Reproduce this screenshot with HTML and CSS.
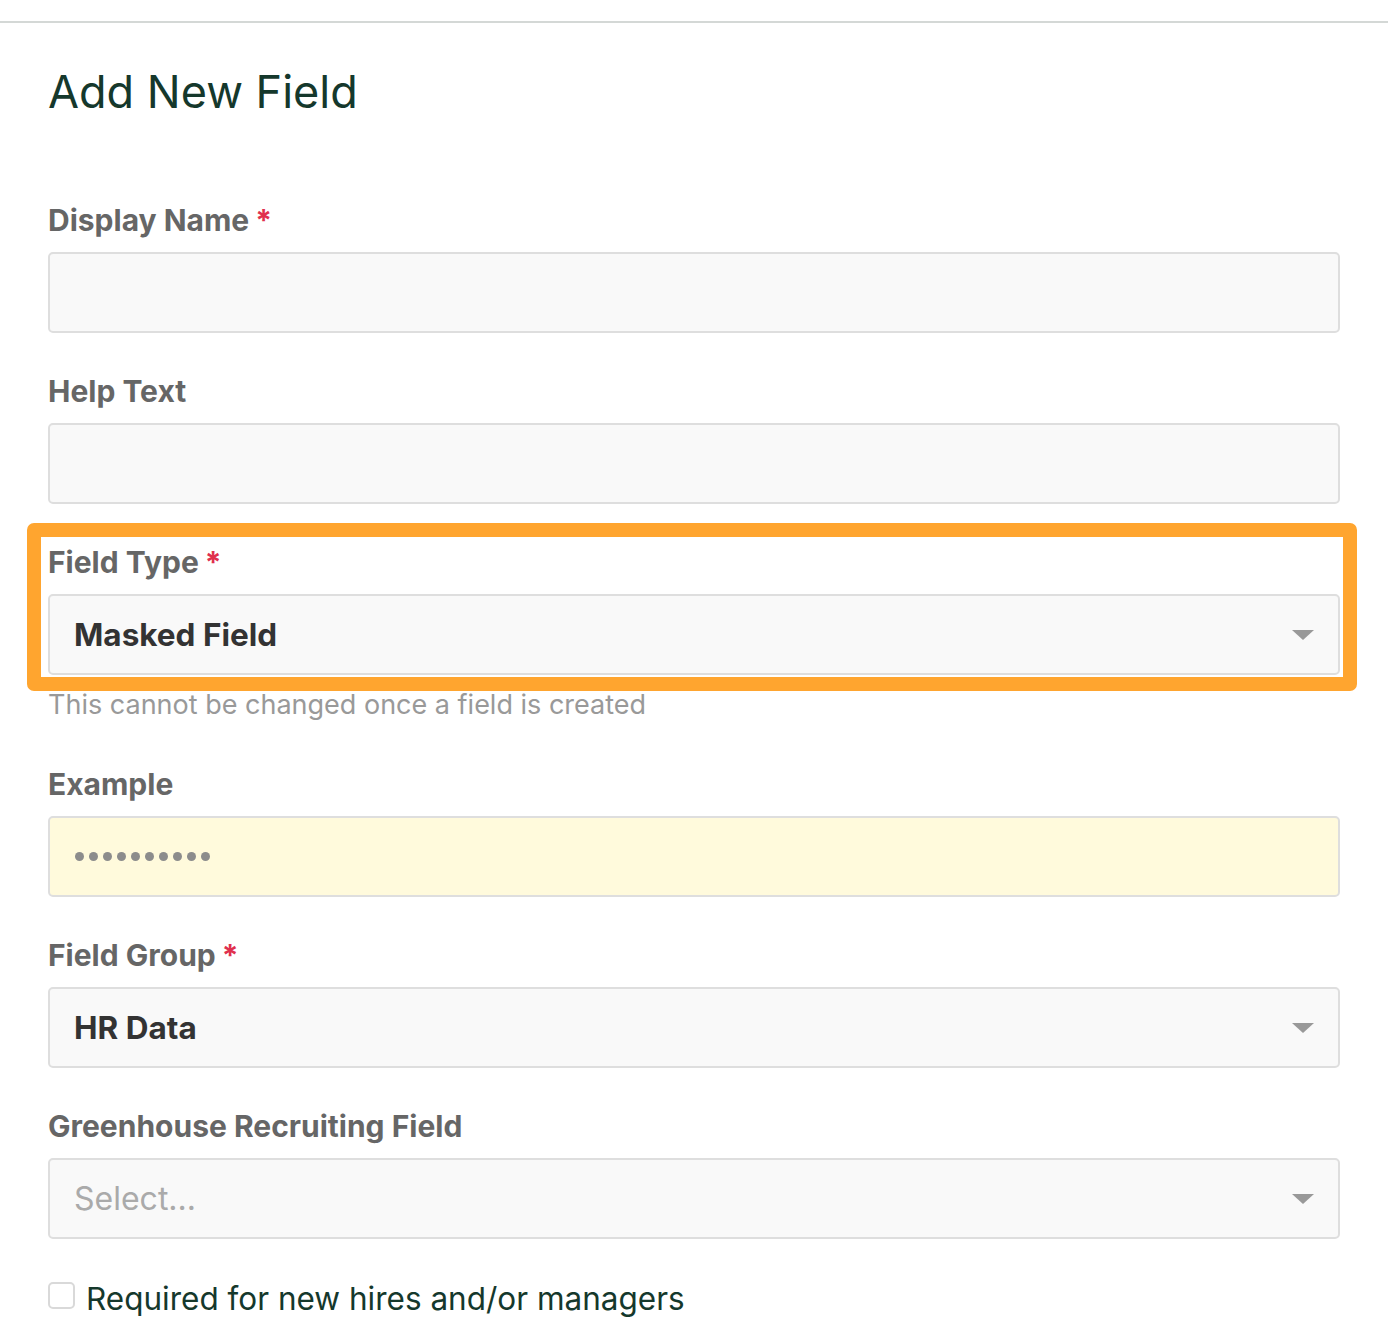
FILE: index.html
```html
<!DOCTYPE html>
<html lang="en">
<head>
    <meta charset="UTF-8">
    <meta name="viewport" content="width=device-width, initial-scale=1.0">
    <title>Add New Field</title>
    <link rel="stylesheet" href="styles.css">
</head>
<body>
    <div class="topbar"></div>

    <main class="page">
        <h1 class="page-title">Add New Field</h1>

        <form class="field-form">
            <div class="form-group">
                <label class="form-label" for="display-name">Display Name<span class="required">*</span></label>
                <input type="text" id="display-name" class="form-input">
            </div>

            <div class="form-group">
                <label class="form-label" for="help-text">Help Text</label>
                <input type="text" id="help-text" class="form-input">
            </div>

            <div class="form-group form-group--highlight">
                <label class="form-label">Field Type<span class="required">*</span></label>
                <div class="form-select">
                    <span class="select-value">Masked Field</span>
                    <span class="select-caret"></span>
                </div>
                <div class="highlight-frame"></div>
            </div>
            <p class="form-hint">This cannot be changed once a field is created</p>

            <div class="form-group">
                <label class="form-label">Example</label>
                <div class="form-input form-input--example">
                    <span class="mask-dot"></span><span class="mask-dot"></span><span class="mask-dot"></span><span class="mask-dot"></span><span class="mask-dot"></span><span class="mask-dot"></span><span class="mask-dot"></span><span class="mask-dot"></span><span class="mask-dot"></span><span class="mask-dot"></span>
                </div>
            </div>

            <div class="form-group">
                <label class="form-label">Field Group<span class="required">*</span></label>
                <div class="form-select">
                    <span class="select-value">HR Data</span>
                    <span class="select-caret"></span>
                </div>
            </div>

            <div class="form-group">
                <label class="form-label">Greenhouse Recruiting Field</label>
                <div class="form-select">
                    <span class="select-value select-value--placeholder">Select...</span>
                    <span class="select-caret"></span>
                </div>
            </div>

            <label class="checkbox-row">
                <span class="checkbox-box"></span>
                <span class="checkbox-text">Required for new hires and/or managers</span>
            </label>
        </form>
    </main>
</body>
</html>
```

FILE: styles.css
```css
:root {
    --title-color: #15382c;
    --label-color: #666666;
    --hint-color: #999999;
    --value-color: #333333;
    --required-color: #e0304e;
    --border-color: #dedede;
    --input-bg: #f9f9f9;
    --highlight: #ffa52f;
}

* {
    box-sizing: border-box;
    margin: 0;
    padding: 0;
}

body {
    font-family: Inter, "Liberation Sans", Arial, sans-serif;
    background-color: #ffffff;
    color: var(--value-color);
}

.topbar {
    height: 23px;
    border-bottom: 2px solid #d4d8d6;
}

.page {
    padding: 0 48px;
}

.page-title {
    margin-top: 41px;
    font-size: 45px;
    line-height: 56px;
    font-weight: 400;
    color: var(--title-color);
}

.field-form {
    margin-top: 84px;
}

.form-group {
    margin-bottom: 42px;
}

.form-label {
    display: block;
    margin-bottom: 16px;
    font-size: 30px;
    line-height: 32px;
    font-weight: 700;
    color: var(--label-color);
}

.required {
    margin-left: 6px;
    color: var(--required-color);
}

.form-input,
.form-select {
    display: flex;
    align-items: center;
    width: 100%;
    height: 81px;
    padding: 0 24px;
    border: 2px solid var(--border-color);
    border-radius: 5px;
    background-color: var(--input-bg);
    font-family: inherit;
    font-size: 31px;
}

.form-input:focus {
    outline: none;
}

.form-select {
    justify-content: space-between;
}

.select-value {
    font-size: 31.5px;
    font-weight: 700;
    color: var(--value-color);
}

.select-value--placeholder {
    font-size: 32px;
    font-weight: 400;
    color: #aaaaaa;
}

.select-caret {
    width: 0;
    height: 0;
    border-left: 11px solid transparent;
    border-right: 11px solid transparent;
    border-top: 10px solid #999999;
}

.form-input--example {
    gap: 5px;
    padding-left: 25px;
    background-color: #fffadc;
}

.mask-dot {
    width: 9px;
    height: 9px;
    border-radius: 50%;
    background-color: #8c8c8c;
}

/* orange annotation round the field type */
.form-group--highlight {
    position: relative;
    margin-bottom: 0;
}

.highlight-frame {
    position: absolute;
    top: -23px;
    left: -21px;
    right: -17px;
    bottom: -16px;
    border: 14px solid var(--highlight);
    border-radius: 7px;
    pointer-events: none;
}

.form-hint {
    margin: 15px 0 48px;
    font-size: 27px;
    line-height: 30px;
    color: var(--hint-color);
}

.checkbox-row {
    display: flex;
    align-items: flex-start;
    gap: 11px;
}

.checkbox-box {
    width: 27px;
    height: 27px;
    margin-top: 1px;
    border: 2px solid #d9d9d9;
    border-radius: 5px;
    background-color: #ffffff;
}

.checkbox-text {
    font-size: 31.5px;
    line-height: 36px;
    color: var(--title-color);
}
```
